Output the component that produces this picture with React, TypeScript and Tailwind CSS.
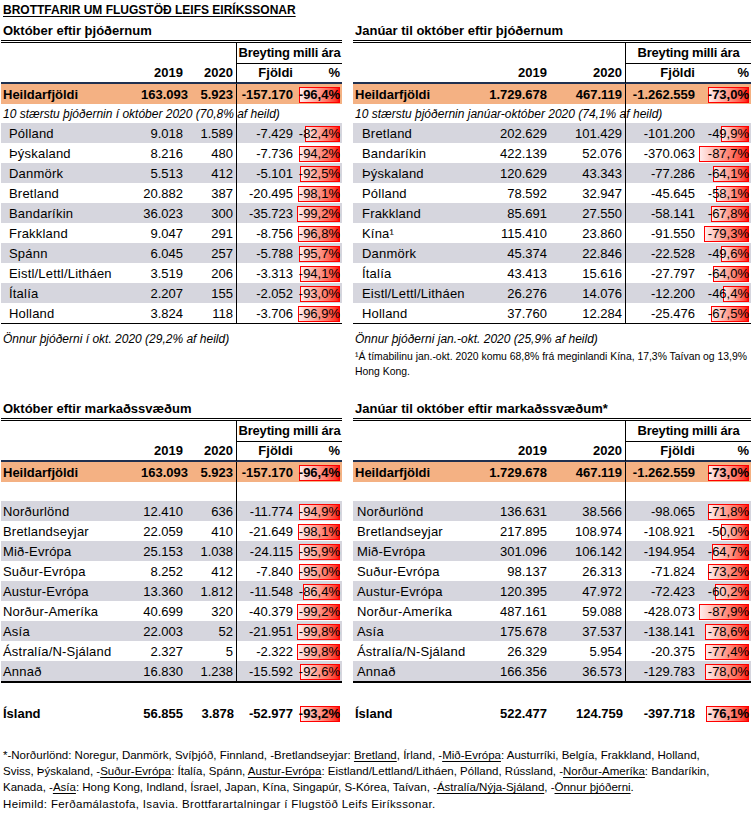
import React from "react";

type Row = { n: React.ReactNode; a: string; b: string; c: string; p: string };
type Cfg = { cols: string; scale: number; w: string; indent: string };

const L: Cfg = { cols: "grid-cols-[140px_44px_52px_59px_46px]", scale: 0.43, w: "w-[341px]", indent: "pl-[8px]" };
const R: Cfg = { cols: "grid-cols-[127px_69px_77px_72px_53px]", scale: 0.565, w: "w-[398px]", indent: "pl-[9px]" };

const num = (p: string) => Math.abs(parseFloat(p.replace("%", "").replace(",", ".")));

function PctCell({ p, scale }: { p: string; scale: number }) {
  return (
    <div className="relative h-full text-right pr-[2px]">
      <div
        className="absolute right-[2px] top-[2px] h-[16px] border border-[#ff0000] bg-gradient-to-r from-[#ffecec] to-[#ff0000]"
        style={{ width: Math.round(num(p) * scale) }}
      />
      <span className="relative">{p}</span>
    </div>
  );
}

function DataRow({ r, cfg, bg, bold, namePad, line = true }: { r: Row; cfg: Cfg; bg: string; bold?: boolean; namePad: string; line?: boolean }) {
  return (
    <div className={`grid ${cfg.cols} h-[20px] leading-[20px] pt-[1px] ${bg} ${bold ? "font-bold" : ""}`}>
      <div className={`${namePad} whitespace-nowrap ${bold ? "" : "tracking-[0.2px]"}`}>{r.n}</div>
      <div className="text-right pr-[2px]">{r.a}</div>
      <div className={`text-right pr-[3px] -mt-[1px] pt-[1px] ${line ? "border-r border-black" : ""}`}>{r.b}</div>
      <div className="text-right pr-[3px]">{r.c}</div>
      <PctCell p={r.p} scale={cfg.scale} />
    </div>
  );
}

function Header({ cfg, title }: { cfg: Cfg; title: string }) {
  return (
    <>
      <div className="h-[19px] leading-[19px] pl-[2px] font-bold whitespace-nowrap">{title}</div>
      <div className="h-[3px] border-t border-b border-black" />
      <div className={`grid ${cfg.cols} h-[20px]`}>
        <div />
        <div />
        <div className="border-r border-black" />
        <div className="col-span-2 border-b border-black flex justify-center font-bold leading-[20px] whitespace-nowrap">
          <span className="tracking-[-0.2px]">Breyting milli ára</span>
        </div>
      </div>
      <div className={`grid ${cfg.cols} h-[21px] border-b-2 border-[#1f3050] font-bold leading-[20px]`}>
        <div />
        <div className="text-right pr-[2px]">2019</div>
        <div className="text-right pr-[3px] border-r border-black">2020</div>
        <div className="text-right pr-[3px]">Fjöldi</div>
        <div className="text-right pr-[2px]">%</div>
      </div>
    </>
  );
}

function LineRow({ cfg, h, children }: { cfg: Cfg; h: string; children?: React.ReactNode }) {
  return (
    <div className={`grid ${cfg.cols} ${h}`}>
      <div className="relative z-10 whitespace-nowrap pl-[2px] italic text-[12px] leading-[20px]">{children}</div>
      <div />
      <div className="border-r border-black" />
      <div />
      <div />
    </div>
  );
}

function TopTable({ cfg, title, total, note, rows }: { cfg: Cfg; title: string; total: Row; note: string; rows: Row[] }) {
  return (
    <div className={cfg.w}>
      <Header cfg={cfg} title={title} />
      <DataRow r={total} cfg={cfg} bg="bg-[#f4b183]" bold namePad="pl-[2px]" />
      <LineRow cfg={cfg} h="h-[19px]">{note}</LineRow>
      {rows.map((r, i) => (
        <DataRow key={i} r={r} cfg={cfg} bg={i % 2 === 0 ? "bg-[#d6d6de]" : "bg-white"} namePad={cfg.indent} />
      ))}
      <div className="border-t border-black" />
    </div>
  );
}

function BottomTable({ cfg, title, total, rows, island, namePad }: { cfg: Cfg; title: string; total: Row; rows: Row[]; island: Row; namePad: string }) {
  return (
    <div className={cfg.w}>
      <Header cfg={cfg} title={title} />
      <DataRow r={total} cfg={cfg} bg="bg-[#f4b183]" bold namePad="pl-[2px]" />
      <LineRow cfg={cfg} h="h-[19px]" />
      {rows.map((r, i) => (
        <DataRow key={i} r={r} cfg={cfg} bg={i % 2 === 0 ? "bg-[#d6d6de]" : "bg-white"} namePad={namePad} />
      ))}
      <div className="border-t-2 border-black" />
      <div className="h-[20px]" />
      <DataRow r={island} cfg={cfg} bg="bg-white" bold namePad="pl-[2px]" line={false} />
    </div>
  );
}

const r = (n: React.ReactNode, a: string, b: string, c: string, p: string): Row => ({ n, a, b, c, p });

const topLeft = [
  r("Pólland", "9.018", "1.589", "-7.429", "-82,4%"),
  r("Þýskaland", "8.216", "480", "-7.736", "-94,2%"),
  r("Danmörk", "5.513", "412", "-5.101", "-92,5%"),
  r("Bretland", "20.882", "387", "-20.495", "-98,1%"),
  r("Bandaríkin", "36.023", "300", "-35.723", "-99,2%"),
  r("Frakkland", "9.047", "291", "-8.756", "-96,8%"),
  r("Spánn", "6.045", "257", "-5.788", "-95,7%"),
  r("Eistl/Lettl/Litháen", "3.519", "206", "-3.313", "-94,1%"),
  r("Ítalía", "2.207", "155", "-2.052", "-93,0%"),
  r("Holland", "3.824", "118", "-3.706", "-96,9%"),
];

const topRight = [
  r("Bretland", "202.629", "101.429", "-101.200", "-49,9%"),
  r("Bandaríkin", "422.139", "52.076", "-370.063", "-87,7%"),
  r("Þýskaland", "120.629", "43.343", "-77.286", "-64,1%"),
  r("Pólland", "78.592", "32.947", "-45.645", "-58,1%"),
  r("Frakkland", "85.691", "27.550", "-58.141", "-67,8%"),
  r("Kína¹", "115.410", "23.860", "-91.550", "-79,3%"),
  r("Danmörk", "45.374", "22.846", "-22.528", "-49,6%"),
  r("Ítalía", "43.413", "15.616", "-27.797", "-64,0%"),
  r("Eistl/Lettl/Litháen", "26.276", "14.076", "-12.200", "-46,4%"),
  r("Holland", "37.760", "12.284", "-25.476", "-67,5%"),
];

const botLeft = [
  r("Norðurlönd", "12.410", "636", "-11.774", "-94,9%"),
  r("Bretlandseyjar", "22.059", "410", "-21.649", "-98,1%"),
  r("Mið-Evrópa", "25.153", "1.038", "-24.115", "-95,9%"),
  r("Suður-Evrópa", "8.252", "412", "-7.840", "-95,0%"),
  r("Austur-Evrópa", "13.360", "1.812", "-11.548", "-86,4%"),
  r("Norður-Ameríka", "40.699", "320", "-40.379", "-99,2%"),
  r("Asía", "22.003", "52", "-21.951", "-99,8%"),
  r("Ástralía/N-Sjáland", "2.327", "5", "-2.322", "-99,8%"),
  r("Annað", "16.830", "1.238", "-15.592", "-92,6%"),
];

const botRight = [
  r("Norðurlönd", "136.631", "38.566", "-98.065", "-71,8%"),
  r("Bretlandseyjar", "217.895", "108.974", "-108.921", "-50,0%"),
  r("Mið-Evrópa", "301.096", "106.142", "-194.954", "-64,7%"),
  r("Suður-Evrópa", "98.137", "26.313", "-71.824", "-73,2%"),
  r("Austur-Evrópa", "120.395", "47.972", "-72.423", "-60,2%"),
  r("Norður-Ameríka", "487.161", "59.088", "-428.073", "-87,9%"),
  r("Asía", "175.678", "37.537", "-138.141", "-78,6%"),
  r("Ástralía/N-Sjáland", "26.329", "5.954", "-20.375", "-77,4%"),
  r("Annað", "166.356", "36.573", "-129.783", "-78,0%"),
];

const totL = r("Heildarfjöldi", "163.093", "5.923", "-157.170", "-96,4%");
const totR = r("Heildarfjöldi", "1.729.678", "467.119", "-1.262.559", "-73,0%");

const U = ({ children }: { children: React.ReactNode }) => <span className="underline underline-offset-2">{children}</span>;

export default function App() {
  return (
    <div className="w-[752px] h-[815px] bg-white text-black text-[13px] font-['Liberation_Sans',Arial,sans-serif] pl-[1px]">
      <div className="h-[21px] leading-[21px] pl-[2px] text-[12px] font-bold underline underline-offset-2 whitespace-nowrap">
        BROTTFARIR UM FLUGSTÖÐ LEIFS EIRÍKSSONAR
      </div>
      <div className="flex gap-[11px] h-[378px]">
        <div>
          <TopTable cfg={L} title="Október eftir þjóðernum" total={totL} note="10 stærstu þjóðernin í október 2020 (70,8% af heild)" rows={topLeft} />
          <div className="mt-[6px] h-[19px] leading-[19px] pl-[2px] italic text-[12px] whitespace-nowrap">Önnur þjóðerni í okt. 2020 (29,2% af heild)</div>
        </div>
        <div>
          <TopTable cfg={R} title="Janúar til október eftir þjóðernum" total={totR} note="10 stærstu þjóðernin janúar-október 2020 (74,1% af heild)" rows={topRight} />
          <div className="mt-[6px] h-[19px] leading-[19px] pl-[2px] italic text-[12px] whitespace-nowrap">Önnur þjóðerni jan.-okt. 2020 (25,9% af heild)</div>
          <div className="pl-[2px] text-[10.4px] leading-[15px] whitespace-nowrap">
            ¹Á tímabilinu jan.-okt. 2020 komu 68,8% frá meginlandi Kína, 17,3% Taívan og 13,9%
            <br />
            Hong Kong.
          </div>
        </div>
      </div>
      <div className="flex gap-[11px]">
        <BottomTable cfg={L} title="Október eftir markaðssvæðum" total={totL} rows={botLeft} island={r("Ísland", "56.855", "3.878", "-52.977", "-93,2%")} namePad="pl-[2px]" />
        <BottomTable cfg={R} title="Janúar til október eftir markaðssvæðum*" total={totR} rows={botRight} island={r("Ísland", "522.477", "124.759", "-397.718", "-76,1%")} namePad="pl-[4px]" />
      </div>
      <div className="mt-[24px] pl-[2px] text-[11.5px] leading-[16px] whitespace-nowrap">
        <div>
          *-Norðurlönd: Noregur, Danmörk, Svíþjóð, Finnland, -Bretlandseyjar: <U>Bretland</U>, Írland, -<U>Mið-Evrópa</U>: Austurríki, Belgía, Frakkland, Holland,
        </div>
        <div>
          Sviss, Þýskaland, -<U>Suður-Evrópa</U>: Ítalía, Spánn, <U>Austur-Evrópa</U>: Eistland/Lettland/Litháen, Pólland, Rússland, -<U>Norður-Ameríka</U>: Bandaríkin,
        </div>
        <div>
          Kanada, -<U>Asía</U>: Hong Kong, Indland, Ísrael, Japan, Kína, Singapúr, S-Kórea, Taívan, -<U>Ástralía/Nýja-Sjáland</U>, -<U>Önnur þjóðerni</U>.
        </div>
        <div className="mt-[1px] tracking-[0.35px]">Heimild: Ferðamálastofa, Isavia. Brottfarartalningar í Flugstöð Leifs Eiríkssonar.</div>
      </div>
    </div>
  );
}
